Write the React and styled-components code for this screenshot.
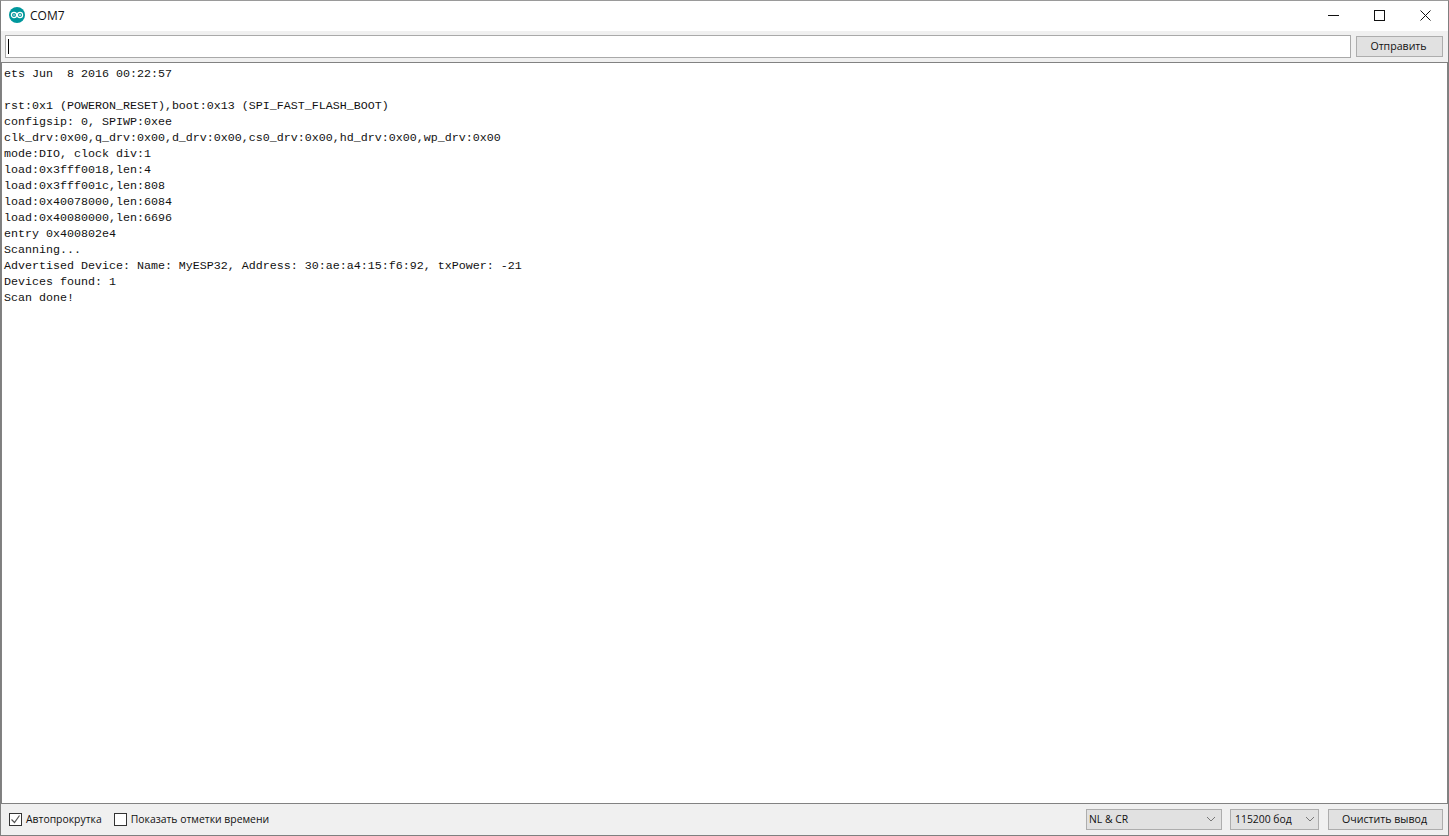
import React from "react";
import styled, { createGlobalStyle } from "styled-components";

const Global = createGlobalStyle`
  html, body { margin: 0; padding: 0; background: #fff; }
  #root { width: 1449px; height: 836px; }
`;

const Win = styled.div`
  width: 1449px; height: 836px; box-sizing: border-box;
  border: 1px solid #7f7f7f; border-top-color: #9a9a9a;
  display: flex; flex-direction: column; background: #f0f0f0;
  font-family: "Open Sans", "Noto Sans", sans-serif; font-size: 10.4px; color: #111; overflow: hidden;
`;
const TitleBar = styled.div`
  height: 30px; flex: none; background: #fff; display: flex; align-items: center; padding: 0 0 2px 8px; box-sizing: border-box;
`;
const TitleText = styled.span`
  margin-left: 5px; font-size: 12px; color: #111; font-family: "Open Sans", sans-serif;
`;
const WinButtons = styled.div`
  margin-left: auto; display: flex; height: 28px;
`;
const WinButton = styled.div`
  width: 46px; display: flex; align-items: center; justify-content: center;
`;
const SendRow = styled.div`
  height: 31px; flex: none; display: flex; align-items: center; gap: 5px; padding: 0 5px 0 4px; box-sizing: border-box;
`;
const Input = styled.div`
  flex: 1; height: 23px; box-sizing: border-box; border: 1px solid #a9a9a9; background: #fff; display: flex; align-items: center; padding-left: 2px;
`;
const Caret = styled.div`
  width: 1px; height: 15px; background: #000;
`;
const Btn = styled.div`
  width: ${p => p.$w}px; height: 21px; box-sizing: border-box; border: 1px solid #adadad; background: #e1e1e1; padding: 0 2px 1px 0;
  display: flex; align-items: center; justify-content: center; color: #111; font-size: 10.6px;
`;
const Output = styled.pre`
  flex: 1; margin: 0; min-height: 0; background: #fff; border: 1px solid #828282; padding: 3px 0 0 2px;
  font-family: "Liberation Mono", monospace; font-size: 11.67px; line-height: 16px; color: #111;
`;
const StatusBar = styled.div`
  height: 31px; flex: none; display: flex; align-items: center; padding: 0 5px 0 8px;
`;
const CheckLabel = styled.label`
  display: flex; align-items: center; gap: 4px; margin-right: 12px; white-space: nowrap; line-height: 13px;
`;
const Box = styled.span`
  width: 13px; height: 13px; box-sizing: border-box; border: 1px solid #333; background: #fff; display: flex; align-items: center; justify-content: center;
`;
const Select = styled.div`
  width: ${p => p.$w}px; height: 21px; box-sizing: border-box; border: 1px solid #adadad; background: #e1e1e1; margin-right: ${p => p.$mr}px;
  display: flex; align-items: center; justify-content: space-between; padding: 0 ${p => p.$pr}px 1px ${p => p.$pl}px;
`;
const Spacer = styled.div`flex: 1;`;

const log = `ets Jun  8 2016 00:22:57

rst:0x1 (POWERON_RESET),boot:0x13 (SPI_FAST_FLASH_BOOT)
configsip: 0, SPIWP:0xee
clk_drv:0x00,q_drv:0x00,d_drv:0x00,cs0_drv:0x00,hd_drv:0x00,wp_drv:0x00
mode:DIO, clock div:1
load:0x3fff0018,len:4
load:0x3fff001c,len:808
load:0x40078000,len:6084
load:0x40080000,len:6696
entry 0x400802e4
Scanning...
Advertised Device: Name: MyESP32, Address: 30:ae:a4:15:f6:92, txPower: -21
Devices found: 1
Scan done!`;

const Logo = () => (
  <svg width="16" height="16" viewBox="0 0 16 16">
    <circle cx="8" cy="8" r="8" fill="#00979c" />
    <circle cx="5" cy="8" r="2.6" fill="none" stroke="#fff" strokeWidth="1.2" />
    <circle cx="11" cy="8" r="2.6" fill="none" stroke="#fff" strokeWidth="1.2" />
    <path d="M4 8h2M10 8h2M11 7v2" stroke="#fff" strokeWidth="0.8" />
  </svg>
);
const Chevron = () => (
  <svg width="10" height="6" viewBox="0 0 10 6"><path d="M1 1l4 4 4-4" fill="none" stroke="#777" strokeWidth="1" /></svg>
);

export default function App() {
  return (
    <Win>
      <Global />
      <TitleBar>
        <Logo />
        <TitleText>COM7</TitleText>
        <WinButtons>
          <WinButton><svg width="11" height="11" viewBox="0 0 11 11"><path d="M0 5.5h11" stroke="#111" /></svg></WinButton>
          <WinButton><svg width="11" height="11" viewBox="0 0 11 11"><rect x=".5" y=".5" width="10" height="10" fill="none" stroke="#111" /></svg></WinButton>
          <WinButton><svg width="11" height="11" viewBox="0 0 11 11"><path d="M.5.5l10 10M10.5.5l-10 10" stroke="#111" /></svg></WinButton>
        </WinButtons>
      </TitleBar>
      <SendRow>
        <Input><Caret /></Input>
        <Btn $w={87}>Отправить</Btn>
      </SendRow>
      <Output>{log}</Output>
      <StatusBar>
        <CheckLabel><Box><svg width="11" height="11" viewBox="0 0 11 11"><path d="M1.5 5.5l3 3 5-7" fill="none" stroke="#555" strokeWidth="1.2" /></svg></Box>Автопрокрутка</CheckLabel>
        <CheckLabel><Box />Показать отметки времени</CheckLabel>
        <Spacer />
        <Select $w={136} $mr={8} $pl={2} $pr={5}>NL &amp; CR<Chevron /></Select>
        <Select $w={89} $mr={9} $pl={4} $pr={3}>115200 бод<Chevron /></Select>
        <Btn $w={115}>Очистить вывод</Btn>
      </StatusBar>
    </Win>
  );
}
